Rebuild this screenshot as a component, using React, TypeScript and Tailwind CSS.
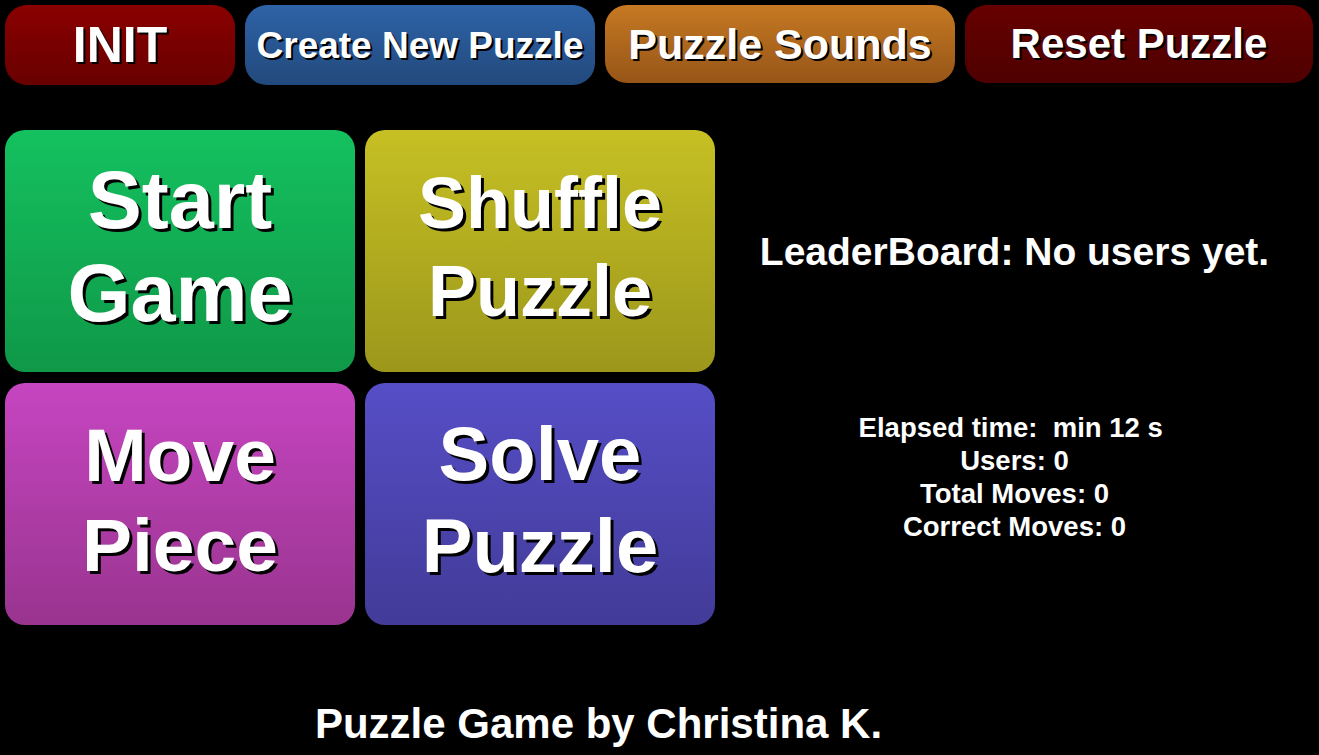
import React from "react";

const font = { fontFamily: '"Liberation Sans", Arial, sans-serif' };

function TopButton({
  label,
  className,
}: {
  label: string;
  className: string;
}) {
  return (
    <button
      className={`flex items-center justify-center rounded-[22px] font-bold text-white leading-none [text-shadow:2px_2px_0_#000] ${className}`}
    >
      {label}
    </button>
  );
}

function BigButton({
  lines,
  className,
}: {
  lines: string[];
  className: string;
}) {
  return (
    <button
      className={`flex flex-col items-center justify-center rounded-[20px] pb-[8px] font-bold text-white [text-shadow:3px_3px_0_#000] ${className}`}
    >
      {lines.map((l) => (
        <span key={l}>{l}</span>
      ))}
    </button>
  );
}

export default function App() {
  return (
    <div className="min-h-[755px] w-full bg-black text-white" style={font}>
      <div className="flex gap-[10px] px-[5px] pt-[5px]">
        <TopButton
          label="INIT"
          className="w-[230px] h-[80px] text-[50px] bg-gradient-to-b from-[#8a0000] to-[#680000]"
        />
        <TopButton
          label="Create New Puzzle"
          className="w-[350px] h-[80px] text-[37px] bg-gradient-to-b from-[#2e63a8] to-[#22497c]"
        />
        <TopButton
          label="Puzzle Sounds"
          className="w-[350px] h-[78px] text-[43px] bg-gradient-to-b from-[#c67922] to-[#965518]"
        />
        <TopButton
          label="Reset Puzzle"
          className="w-[348px] h-[78px] text-[42px] bg-gradient-to-b from-[#670000] to-[#4e0000]"
        />
      </div>

      <div className="flex mt-[45px] px-[5px]">
        <div className="grid grid-cols-[350px_350px] grid-rows-[242px_242px] gap-x-[10px] gap-y-[11px]">
          <BigButton
            lines={["Start", "Game"]}
            className="text-[81px] leading-[93px] bg-gradient-to-b from-[#14c15f] to-[#0f9848]"
          />
          <BigButton
            lines={["Shuffle", "Puzzle"]}
            className="text-[72px] leading-[88px] bg-gradient-to-b from-[#c6c024] to-[#9c971b]"
          />
          <BigButton
            lines={["Move", "Piece"]}
            className="text-[75px] leading-[90px] bg-gradient-to-b from-[#c645c1] to-[#99348f]"
          />
          <BigButton
            lines={["Solve", "Puzzle"]}
            className="text-[76px] leading-[92px] bg-gradient-to-b from-[#564ec6] to-[#423b98]"
          />
        </div>

        <div className="flex-1 grid grid-rows-[242px_242px] gap-y-[11px] font-bold text-center">
          <div className="flex items-center justify-center text-[39px] leading-none">
            LeaderBoard: No users yet.
          </div>
          <div className="flex flex-col items-center justify-start pt-[28px] text-[27.5px] leading-[33px]">
            <div className="whitespace-pre">Elapsed time:  min 12 s </div>
            <div>Users: 0</div>
            <div>Total Moves: 0</div>
            <div>Correct Moves: 0</div>
          </div>
        </div>
      </div>

      <div className="mt-[78px] pr-[122px] text-center text-[42px] font-bold leading-none">
        Puzzle Game by Christina K.
      </div>
    </div>
  );
}
